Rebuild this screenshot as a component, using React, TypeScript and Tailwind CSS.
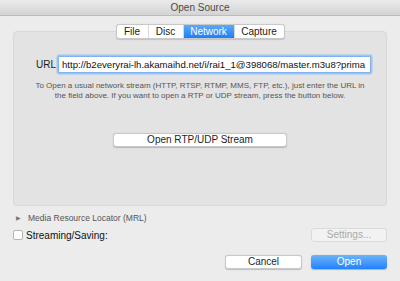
import React from 'react';

const font = { fontFamily: '"Liberation Sans", Arial, sans-serif' };

const tabs = ['File', 'Disc', 'Network', 'Capture'];

function Tabs({ active }: { active: string }) {
  return (
    <div className="relative z-10 flex justify-center">
      <div className="flex h-[15px] overflow-hidden rounded-[3px] border border-[#c8c8c8] bg-white shadow-[0_0.5px_1px_rgba(0,0,0,0.15)]">
        {tabs.map((t, i) => (
          <div
            key={t}
            className={
              'flex items-center justify-center text-[10px] leading-none ' +
              (i > 0 ? 'border-l border-[#d9d9d9] ' : '') +
              (t === active
                ? 'bg-gradient-to-b from-[#5aa9fb] to-[#1a7ff5] text-white '
                : 'text-[#1a1a1a] ') +
              (t === 'File' ? 'w-[31px]' : t === 'Disc' ? 'w-[35px]' : t === 'Network' ? 'w-[51px]' : 'w-[50px]')
            }
          >
            {t}
          </div>
        ))}
      </div>
    </div>
  );
}

function Button({ label, className = '', disabled = false }: { label: string; className?: string; disabled?: boolean }) {
  return (
    <div
      className={
        'flex h-[14px] items-center justify-center rounded-[3px] border text-[10px] leading-none ' +
        (disabled
          ? 'border-[#dadada] bg-[#f2f2f2] text-[#a9a9a9] '
          : 'border-[#c9c9c9] bg-white text-[#1e1e1e] shadow-[0_0.5px_1px_rgba(0,0,0,0.2)] ') +
        className
      }
    >
      {label}
    </div>
  );
}

export default function App() {
  return (
    <div className="h-[281px] w-[400px] overflow-hidden bg-[#ececec]" style={font}>
      {/* Title bar */}
      <div className="flex h-[16px] items-center justify-center border-b border-[#bcbcbc] bg-gradient-to-b from-[#ebebeb] to-[#d4d4d4] text-[10px] text-[#4a4a4a]">
        Open Source
      </div>

      <div className="px-[13px] pt-[8px]">
        <Tabs active="Network" />

        {/* Panel */}
        <div className="-mt-[8px] h-[175px] rounded-[4px] border border-[#d8d8d8] bg-[#e3e3e3] px-[15px] pt-[24px]">
          <div className="flex items-center">
            <span className="ml-[7px] w-[18px] text-[10px] text-[#1a1a1a]">URL</span>
            <div className="ml-[4px] flex h-[17px] flex-1 items-center overflow-hidden rounded-[1px] border border-[#7fb2ee] bg-white pl-[3px] shadow-[0_0_0_1.5px_#9cc4f4]">
              <span className="whitespace-nowrap text-[9.6px] leading-none text-[#111]">
                http://b2everyrai-lh.akamaihd.net/i/rai1_1@398068/master.m3u8?prima
              </span>
            </div>
          </div>

          <p className="mt-[8px] text-center text-[8px] leading-[10px] text-[#555]">
            To Open a usual network stream (HTTP, RTSP, RTMP, MMS, FTP, etc.), just enter the URL in
            <br />
            the field above. If you want to open a RTP or UDP stream, press the button below.
          </p>

          <div className="mt-[32px] flex justify-center">
            <Button label="Open RTP/UDP Stream" className="w-[174px]" />
          </div>
        </div>

        {/* MRL */}
        <div className="mt-[6px] flex items-center gap-[7px] pl-[3px] text-[8.5px] text-[#555]">
          <span className="text-[6px] text-[#777]">▶</span>
          <span>Media Resource Locator (MRL)</span>
        </div>

        {/* Streaming / Settings */}
        <div className="mt-[3px] flex items-center justify-between">
          <div className="flex items-center gap-[3px]">
            <div className="h-[10px] w-[10px] rounded-[2px] border border-[#b5b5b5] bg-white" />
            <span className="text-[10px] text-[#111]">Streaming/Saving:</span>
          </div>
          <Button label="Settings..." className="w-[76px]" disabled />
        </div>

        {/* Bottom buttons */}
        <div className="mt-[12px] flex justify-end gap-[9px]">
          <Button label="Cancel" className="w-[77px]" />
          <div className="flex h-[14px] w-[76px] items-center justify-center rounded-[3px] bg-gradient-to-b from-[#6cb3fa] to-[#1b82fb] text-[10px] leading-none text-white shadow-[0_0.5px_1px_rgba(0,0,0,0.25)]">
            Open
          </div>
        </div>
      </div>
    </div>
  );
}
